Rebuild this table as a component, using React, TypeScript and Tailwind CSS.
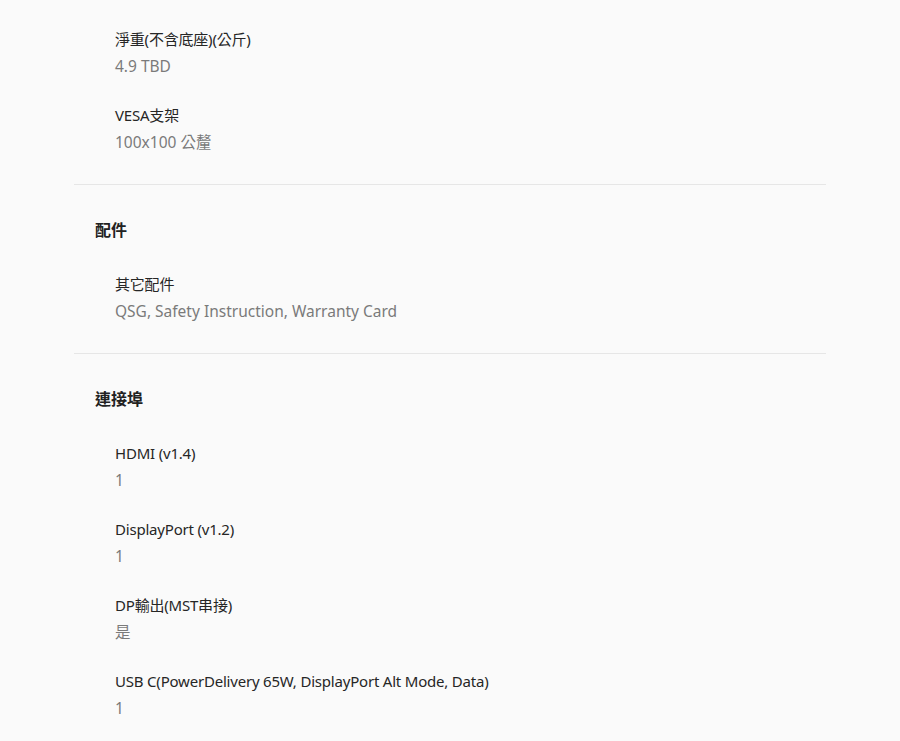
const sections = [
  {
    title: null as string | null,
    items: [
      { label: "淨重(不含底座)(公斤)", value: "4.9 TBD" },
      { label: "VESA支架", value: "100x100 公釐" },
    ],
  },
  {
    title: "配件",
    items: [{ label: "其它配件", value: "QSG, Safety Instruction, Warranty Card" }],
  },
  {
    title: "連接埠",
    items: [
      { label: "HDMI (v1.4)", value: "1" },
      { label: "DisplayPort (v1.2)", value: "1" },
      { label: "DP輸出(MST串接)", value: "是" },
      { label: "USB C(PowerDelivery 65W, DisplayPort Alt Mode, Data)", value: "1" },
    ],
  },
];

export default function App() {
  return (
    <div
      className="min-h-[741px] w-[900px] bg-[#fafafa] overflow-hidden"
      style={{ fontFamily: '"Noto Sans", "Noto Sans CJK TC", sans-serif' }}
    >
      <div className="mx-[74px] pt-[26px]">
        {sections.map((section, i) => (
          <section
            key={i}
            className={i < sections.length - 1 ? "border-b border-[#e6e6e6] pb-[6px]" : ""}
          >
            {section.title && (
              <h3 className="pl-[21px] pt-[32px] pb-[28px] text-[16px] leading-[26px] font-bold text-[#222]">
                {section.title}
              </h3>
            )}
            <div className="pl-[41px]">
              {section.items.map((item) => (
                <div key={item.label} className="mb-[23px]">
                  <div className="text-[15px] leading-[26px] tracking-[-0.2px] text-[#262626]">
                    {item.label}
                  </div>
                  <div className="mt-[1px] text-[15.5px] leading-[26px] text-[#7a7a7a]">
                    {item.value}
                  </div>
                </div>
              ))}
            </div>
          </section>
        ))}
      </div>
    </div>
  );
}
